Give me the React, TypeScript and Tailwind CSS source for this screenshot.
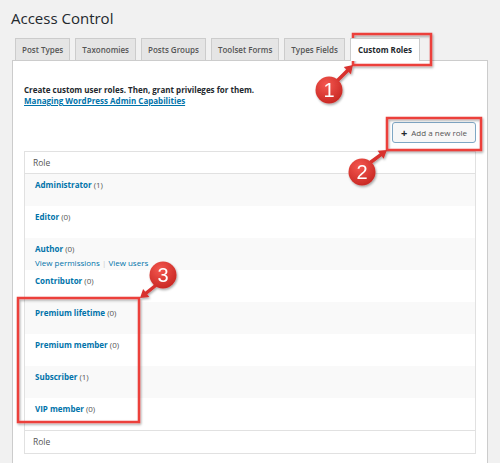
import React from 'react'

const tabs = ['Post Types', 'Taxonomies', 'Posts Groups', 'Toolset Forms', 'Types Fields', 'Custom Roles']

const roles = [
  { name: 'Administrator', count: 1 },
  { name: 'Editor', count: 0 },
  { name: 'Author', count: 0, actions: true },
  { name: 'Contributor', count: 0 },
  { name: 'Premium lifetime', count: 0 },
  { name: 'Premium member', count: 0 },
  { name: 'Subscriber', count: 1 },
  { name: 'VIP member', count: 0 },
]

function Badge({ cx, cy, n, tip, from }: { cx: number; cy: number; n: string; tip: [number, number]; from: [number, number] }) {
  const [tx, ty] = tip
  const [fx, fy] = from
  const ang = Math.atan2(ty - fy, tx - fx)
  const len = 8
  const w = 5
  const bx = tx - Math.cos(ang) * len
  const by = ty - Math.sin(ang) * len
  const px = -Math.sin(ang) * w
  const py = Math.cos(ang) * w
  return (
    <g filter="url(#shadow)">
      <path d={`M${fx} ${fy} L${bx} ${by}`} stroke="#d8302d" strokeWidth="3.5" strokeLinecap="round" />
      <polygon points={`${tx},${ty} ${bx + px},${by + py} ${bx - px},${by - py}`} fill="#d8302d" />
      <circle cx={cx} cy={cy} r="13.5" fill="url(#badge)" />
      <text
        x={cx}
        y={cy + 7}
        textAnchor="middle"
        fill="#fff"
        fontSize="20"
        fontFamily="'Liberation Sans', Arial, sans-serif"
      >
        {n}
      </text>
    </g>
  )
}

export default function App() {
  return (
    <div className="relative w-[500px] h-[463px] overflow-hidden bg-[#f1f1f1] font-['Open_Sans',sans-serif]">
      <div className="pl-[11px] pr-[12px] pt-[7px]">
        <h1 className="text-[15px] leading-[22px] text-[#23282d]">Access Control</h1>

        <div className="mt-[9px] flex items-end gap-[5px] pl-[4px]">
          {tabs.map((t) => {
            const active = t === 'Custom Roles'
            return (
              <div
                key={t}
                className={
                  active
                    ? 'relative z-10 -mb-px h-[23px] shrink-0 whitespace-nowrap border border-b-0 border-[#ccc] bg-white px-[7px] text-[8px] font-bold leading-[22px] text-[#23282d]'
                    : 'h-[22px] shrink-0 whitespace-nowrap border border-b-0 border-[#ccc] bg-[#e5e5e5] px-[6px] text-[8px] font-semibold leading-[21px] text-[#555]'
                }
              >
                {t}
              </div>
            )
          })}
        </div>

        <div className="ml-px w-[476px] border border-[#ccc] bg-white px-[11px] pt-[23px]">
          <p className="text-[8px] font-bold leading-[11px] text-[#23282d]">
            Create custom user roles. Then, grant privileges for them.
          </p>
          <a className="block text-[8px] font-bold leading-[11px] text-[#0073aa] underline">
            Managing WordPress Admin Capabilities
          </a>

          <div className="mt-[16px] flex justify-end">
            <button className="flex h-[21px] w-[84px] items-center justify-center gap-[4px] rounded-[3px] border border-[#7fa7c4] bg-[#f7f7f7] text-[8px] leading-none text-[#555]">
              <span className="text-[11px] font-bold leading-none text-[#23282d]">+</span>
              Add a new role
            </button>
          </div>

          <div className="mt-[8px] border border-[#e1e1e1]">
            <div className="h-[22px] border-b border-[#e1e1e1] pl-[8px] text-[8.5px] leading-[22px] text-[#555]">Role</div>
            {roles.map((r, i) => (
              <div key={r.name} className={`h-[32px] pl-[10px] pt-[5px] ${i % 2 === 0 ? 'bg-[#f9f9f9]' : 'bg-white'}`}>
                <div className="text-[8px] leading-[12px] text-[#555]">
                  <span className="font-bold text-[#0073aa]">{r.name}</span> ({r.count})
                </div>
                {r.actions && (
                  <div className="mt-[2px] text-[8px] leading-[12px] text-[#0073aa]">
                    View permissions <span className="text-[#ccc]">|</span> View users
                  </div>
                )}
              </div>
            ))}
            <div className="h-[23px] border-t border-[#e1e1e1] pl-[8px] text-[8.5px] leading-[22px] text-[#555]">Role</div>
          </div>
          <div className="h-[20px]" />
        </div>
      </div>

      <svg className="pointer-events-none absolute left-0 top-0" width="500" height="463" viewBox="0 0 500 463">
        <defs>
          <radialGradient id="badge" cx="0.4" cy="0.3" r="0.8">
            <stop offset="0" stopColor="#f4574f" />
            <stop offset="1" stopColor="#c4231f" />
          </radialGradient>
          <filter id="shadow" x="-20%" y="-20%" width="140%" height="140%">
            <feDropShadow dx="1" dy="1.5" stdDeviation="1.2" floodColor="#000" floodOpacity="0.35" />
          </filter>
        </defs>
        <g filter="url(#shadow)" fill="none" stroke="#ec3f3b" strokeWidth="2.5">
          <rect x="353" y="34" width="78" height="31" />
          <rect x="387" y="118" width="94" height="32" />
          <rect x="18" y="298" width="121" height="124" />
        </g>
        <Badge cx={329} cy={90} n="1" from={[338, 80]} tip={[353, 65]} />
        <Badge cx={362} cy={172} n="2" from={[371, 162]} tip={[387, 150]} />
        <Badge cx={163} cy={275} n="3" from={[155, 286]} tip={[140, 298]} />
      </svg>
    </div>
  )
}
